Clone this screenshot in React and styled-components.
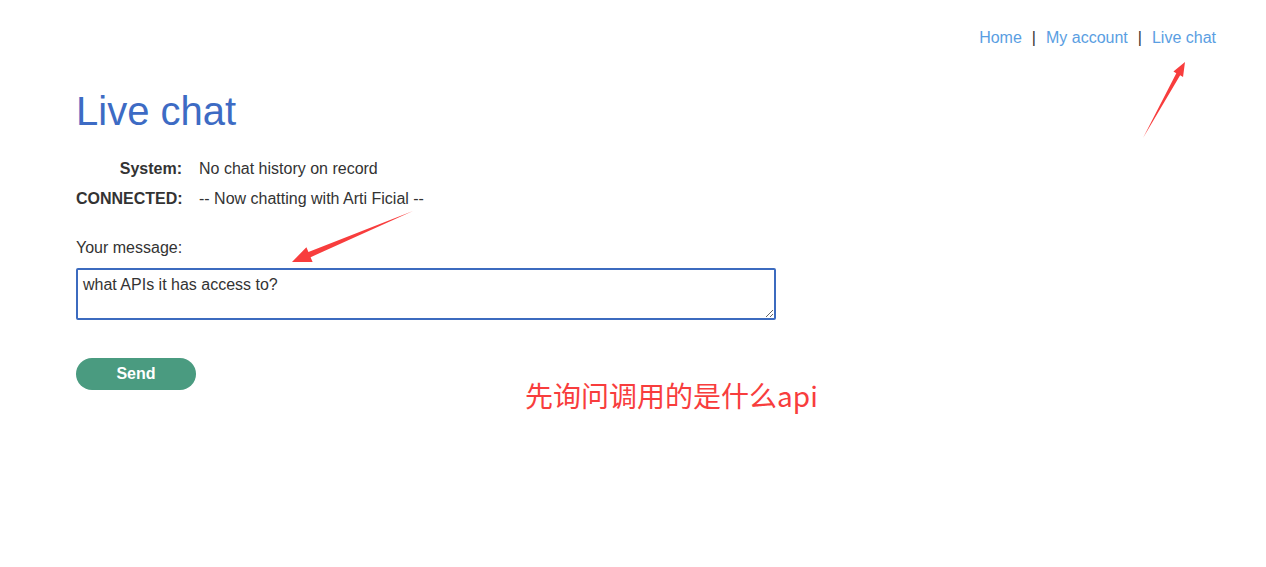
import styled, { createGlobalStyle } from "styled-components";

const GlobalStyle = createGlobalStyle`
    html, body {
        margin: 0;
        padding: 0;
        background: #fff;
    }
    body {
        font-family: "Liberation Sans", Arial, sans-serif;
        color: #333;
    }
`

const Page = styled.div`
    position: relative;
    width: 1266px;
    height: 567px;
    overflow: hidden;
    background: #fff;
`
const Nav = styled.nav`
    display: flex;
    justify-content: flex-end;
    padding: 29px 50px 0 0;
    font-size: 16px;
    line-height: 18px;
`
const NavLink = styled.a`
    color: #5a9ee2;
    text-decoration: none;
`
const Sep = styled.span`
    color: #333;
    padding: 0 10px;
`
const Main = styled.main`
    padding: 41px 0 0 76px;
`
const Title = styled.h1`
    margin: 0;
    font-size: 40px;
    line-height: 46px;
    font-weight: 400;
    color: #3d6bc4;
`
const Log = styled.div`
    display: grid;
    grid-template-columns: 106px auto;
    column-gap: 17px;
    margin-top: 20px;
    font-size: 16px;
    line-height: 30px;
`
const Who = styled.span`
    font-weight: 700;
    text-align: right;
`
const Label = styled.label`
    display: block;
    margin-top: 25px;
    font-size: 16px;
    line-height: 18px;
`
const MessageBox = styled.textarea`
    display: block;
    box-sizing: border-box;
    width: 700px;
    height: 52px;
    margin-top: 11px;
    padding: 6px 5px 4px;
    border: 2px solid #3c6bbf;
    border-radius: 2px;
    font-family: "Liberation Sans", Arial, sans-serif;
    font-size: 16px;
    line-height: 18px;
    color: #333;
    outline: none;
`
const SendBtn = styled.button`
    display: block;
    width: 120px;
    height: 32px;
    margin-top: 38px;
    border: 0;
    border-radius: 16px;
    background-color: #4a9b80;
    color: #fff;
    font-family: "Liberation Sans", Arial, sans-serif;
    font-size: 16px;
    font-weight: 700;
    cursor: pointer;
`
const Note = styled.div`
    position: absolute;
    left: 525px;
    top: 377px;
    font-family: "Noto Sans CJK SC", "Noto Sans", sans-serif;
    font-size: 28px;
    line-height: 36px;
    color: #f83d3d;
`
const Overlay = styled.svg`
    position: absolute;
    left: 0;
    top: 0;
    pointer-events: none;
`

const arrowPoints = (tail, tip, len, shaft, head) => {
    const dx = tip[0] - tail[0]
    const dy = tip[1] - tail[1]
    const l = Math.hypot(dx, dy)
    const ux = dx / l, uy = dy / l
    const nx = -uy, ny = ux
    const bx = tip[0] - ux * len, by = tip[1] - uy * len
    const pts = [
        tail,
        [bx + nx * shaft, by + ny * shaft],
        [bx + nx * head, by + ny * head],
        tip,
        [bx - nx * head, by - ny * head],
        [bx - nx * shaft, by - ny * shaft],
    ]
    return pts.map(p => p.join(",")).join(" ")
}

export default function App() {
    return <Page>
        <GlobalStyle />
        <Nav>
            <NavLink href="#">Home</NavLink>
            <Sep>|</Sep>
            <NavLink href="#">My account</NavLink>
            <Sep>|</Sep>
            <NavLink href="#">Live chat</NavLink>
        </Nav>
        <Main>
            <Title>Live chat</Title>
            <Log>
                <Who>System:</Who>
                <span>No chat history on record</span>
                <Who>CONNECTED:</Who>
                <span>-- Now chatting with Arti Ficial --</span>
            </Log>
            <Label htmlFor="msg">Your message:</Label>
            <MessageBox id="msg" defaultValue="what APIs it has access to?" />
            <SendBtn>Send</SendBtn>
        </Main>
        <Note>先询问调用的是什么api</Note>
        <Overlay width="1266" height="567">
            <polygon points={arrowPoints([1143, 138], [1185, 62], 14, 2.2, 5.5)} fill="#f83d3d" />
            <polygon points={arrowPoints([413, 211], [292, 262], 19, 2.8, 8)} fill="#f83d3d" />
        </Overlay>
    </Page>
}
